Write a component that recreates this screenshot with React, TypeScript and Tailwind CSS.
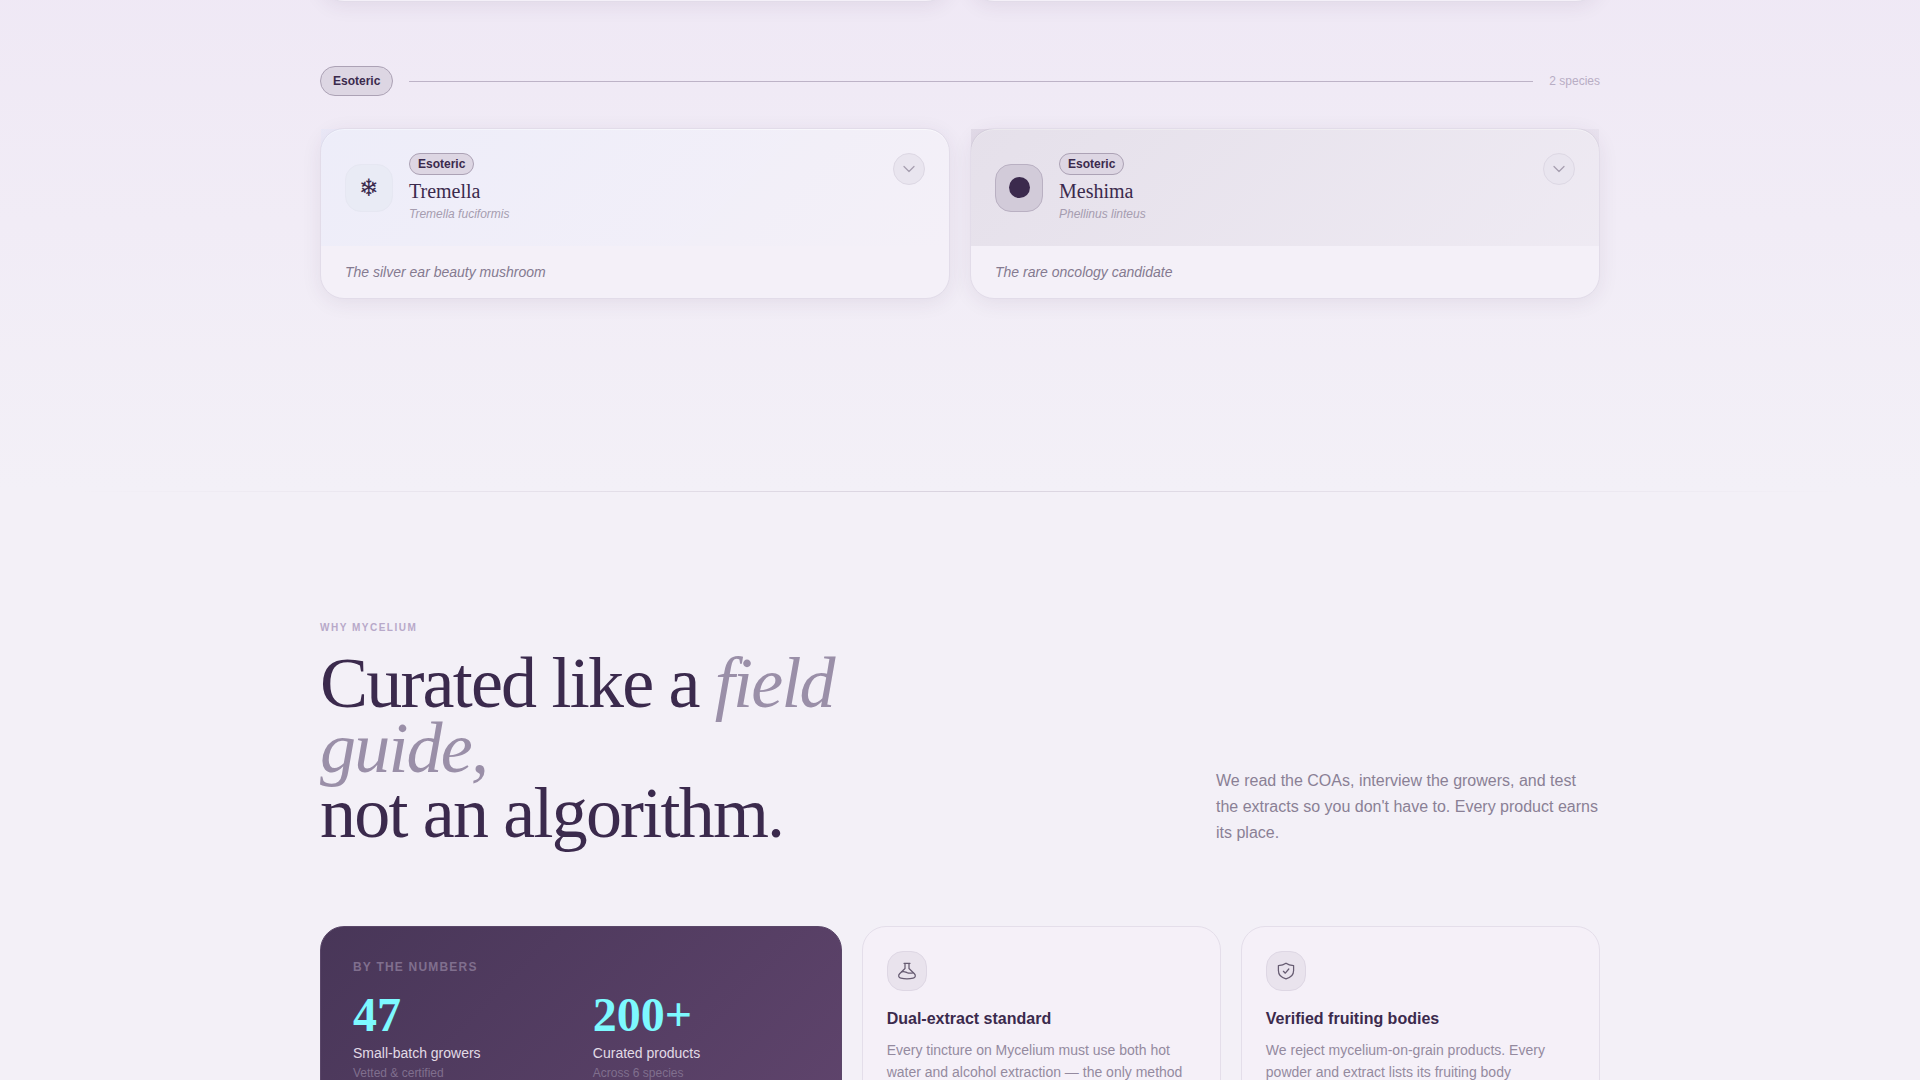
import type { ReactNode } from 'react';

interface Species {
  id: string;
  name: string;
  latin: string;
  tagline: string;
  glyph: ReactNode;
  headerClass: string;
  iconClass: string;
}

const species: Species[] = [
  {
    id: 'tremella',
    name: 'Tremella',
    latin: 'Tremella fuciformis',
    tagline: 'The silver ear beauty mushroom',
    glyph: <span className="font-['DejaVu_Sans',sans-serif] text-2xl leading-none">❄</span>,
    headerClass: 'from-[#d2e1ff]/20 to-[#d2e1ff]/0',
    iconClass: 'border-[#e6e7f2] bg-[#e9ebf5]',
  },
  {
    id: 'meshima',
    name: 'Meshima',
    latin: 'Phellinus linteus',
    tagline: 'The rare oncology candidate',
    glyph: <span className="h-[21px] w-[21px] rounded-full bg-[#3b2a4d]" />,
    headerClass: 'from-[#3b2a4d]/8 to-[#3b2a4d]/3',
    iconClass: 'border-[#b9b0c2] bg-[#d2cbd9]',
  },
];

const stats = [
  { value: '47', label: 'Small-batch growers', note: 'Vetted & certified' },
  { value: '200+', label: 'Curated products', note: 'Across 6 species' },
];

function ChevronIcon() {
  return (
    <svg className="h-4 w-4" viewBox="0 0 16 16" fill="none" stroke="currentColor" strokeWidth="1.25" strokeLinecap="round" strokeLinejoin="round">
      <path d="M3 5.500l5 5 5-5" />
    </svg>
  );
}

function FlaskIcon() {
  return (
    <svg className="h-5 w-5" viewBox="0 0 20 20" fill="none" stroke="currentColor" strokeWidth="1.25" strokeLinecap="round" strokeLinejoin="round">
      <path d="M7 2.300h6M8 2.300v5.200L2.600 12.800C1 14.500 1.500 16.700 3.800 17.200c4 .8 8.400.8 12.400 0 2.300-.5 2.800-2.700 1.200-4.400L12 7.500V2.300" />
      <path d="M4.800 10.800c2.200-.7 4 .3 5.200.8 1.800.7 3.800.7 6 .2" />
    </svg>
  );
}

function ShieldIcon() {
  return (
    <svg className="h-5 w-5" viewBox="0 0 20 20" fill="none" stroke="currentColor" strokeWidth="1.25" strokeLinecap="round" strokeLinejoin="round">
      <path d="M10 2.200C8 3.800 5.200 4.500 2.400 4.500V9.500c0 4.300 3 7.200 7.600 8.300 4.600-1.100 7.600-4 7.600-8.300V4.500C14.800 4.500 12 3.800 10 2.200z" />
      <path d="M7.400 10.300l1.900 1.900 3.500-4.200" />
    </svg>
  );
}

const features = [
  {
    title: 'Dual-extract standard',
    text: 'Every tincture on Mycelium must use both hot water and alcohol extraction — the only method',
    icon: <FlaskIcon />,
  },
  {
    title: 'Verified fruiting bodies',
    text: 'We reject mycelium-on-grain products. Every powder and extract lists its fruiting body',
    icon: <ShieldIcon />,
  },
];

function SpeciesCard({ item }: { item: Species }) {
  return (
    <article className="rounded-3xl border border-[#e2dce9] bg-[#f4f0f8] shadow-[0_4px_20px_rgba(59,42,77,0.08),inset_0_1px_0_rgba(255,255,255,0.6)]">
      <div className={`flex items-center gap-4 bg-linear-135 p-6 ${item.headerClass}`}>
        <div className={`flex h-12 w-12 items-center justify-center rounded-2xl border ${item.iconClass}`}>
          {item.glyph}
        </div>
        <div className="flex-1">
          <span className="mb-1 block w-fit rounded-full border border-[#aca2b5] bg-[#ddd6e3] px-2 py-0.5 text-xs font-bold">
            Esoteric
          </span>
          <h3 className="font-['Liberation_Serif',serif] text-xl leading-[25px]">{item.name}</h3>
          <p className="mt-0.5 text-xs italic text-[#a69db0]">{item.latin}</p>
        </div>
        <button
          type="button"
          aria-label={`Expand ${item.name}`}
          className="flex h-8 w-8 items-center justify-center self-start rounded-full border border-[#ddd8e4] bg-[#e9e5ef] text-[#a79fb0]"
        >
          <ChevronIcon />
        </button>
      </div>
      <p className="px-6 py-4 text-sm italic text-[#847a90]">{item.tagline}</p>
    </article>
  );
}

export default function App() {
  return (
    <div className="h-screen overflow-hidden bg-[#f3f0f7] font-['Liberation_Sans',sans-serif] text-[#3b2a4d]">
      {/* Species catalogue */}
      <section className="bg-linear-to-b from-[#efe8f5] to-[#f3f0f7] px-6 pb-48">
        <div className="mx-auto max-w-7xl">
          <div className="-mt-12 mb-16 grid grid-cols-2 gap-5">
            <div className="h-[50px] rounded-3xl border border-[#e2dce9] bg-[#f4f0f8] shadow-[0_4px_20px_rgba(59,42,77,0.08)]" />
            <div className="h-[50px] rounded-3xl border border-[#e2dce9] bg-[#f4f0f8] shadow-[0_4px_20px_rgba(59,42,77,0.08)]" />
          </div>

          <div className="mb-8 flex items-center gap-4">
            <h2 className="rounded-full border border-[#aca2b5] bg-[#ddd6e3] px-3 py-1.5 text-xs font-bold">Esoteric</h2>
            <div className="h-px flex-1 bg-[#bdb3c7]" />
            <span className="text-xs text-[#b8adc4]">2 species</span>
          </div>

          <div className="grid grid-cols-2 gap-5">
            {species.map((item) => (
              <SpeciesCard key={item.id} item={item} />
            ))}
          </div>
        </div>
      </section>

      {/* Why Mycelium */}
      <section className="px-6 pb-32">
        <div className="mx-12 h-px bg-linear-to-r from-transparent via-[#d9d3df] to-transparent" />
        <div className="mx-auto max-w-7xl pt-32">
          <div className="mb-20 flex items-end justify-between">
            <div className="max-w-xl">
              <p className="mb-4 text-[10px] leading-[15px] font-bold tracking-[0.15em] text-[#b8a9c9] uppercase">Why Mycelium</p>
              <h2 className="font-['Liberation_Serif',serif] text-7xl leading-[65px] tracking-tight">
                Curated like a <em className="text-[#9a8fa8]">field guide,</em>
                <br />
                not an algorithm.
              </h2>
            </div>
            <p className="max-w-sm text-base leading-[26px] text-[#8a8095]">
              We read the COAs, interview the growers, and test the extracts so you don't have to. Every product earns its place.
            </p>
          </div>

          <div className="grid grid-cols-12 gap-5">
            <div className="col-span-5 rounded-3xl border border-[#5a4769] bg-linear-135 from-[#483658] to-[#5f446c] p-8">
              <p className="mb-4 text-xs font-bold tracking-widest text-[#806f8e] uppercase">By the numbers</p>
              <div className="grid grid-cols-2 gap-6">
                {stats.map((stat) => (
                  <div key={stat.label}>
                    <div className="font-['Liberation_Serif',serif] text-5xl leading-none font-bold text-[#7df9ff]">{stat.value}</div>
                    <div className="mt-1 text-sm text-[#e2dbe6]">{stat.label}</div>
                    <div className="mt-0.5 text-xs text-[#806f8e]">{stat.note}</div>
                  </div>
                ))}
              </div>
            </div>

            <div className="col-span-7 grid grid-cols-2 gap-5">
              {features.map((feature) => (
                <div key={feature.title} className="rounded-3xl border border-[#e4deea] bg-[#f5f0f8] p-6">
                  <div className="mb-4 flex h-10 w-10 items-center justify-center rounded-2xl border border-[#ded7e4] bg-[#e9e3ed] text-[#665b71]">
                    {feature.icon}
                  </div>
                  <h3 className="mb-2 text-base font-bold">{feature.title}</h3>
                  <p className="text-sm leading-[22px] text-[#948a9f]">{feature.text}</p>
                </div>
              ))}
            </div>
          </div>
        </div>
      </section>
    </div>
  );
}
